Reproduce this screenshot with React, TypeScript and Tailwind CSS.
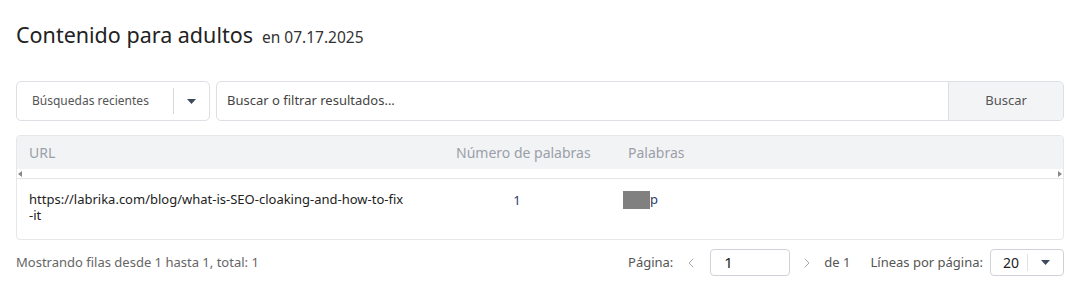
import { FC } from "react";
import { ChevronLeft, ChevronRight } from "lucide-react";

const Caret: FC = () => (
  <svg width="9" height="5" viewBox="0 0 9 5" className="fill-[#3d4a5c]">
    <path d="M0 0h9L4.5 5z" />
  </svg>
);

export default function App() {
  return (
    <div
      className="w-[1075px] h-[300px] bg-white pl-4 pr-[11px] text-[#333]"
      style={{ fontFamily: '"Noto Sans", sans-serif' }}
    >
      {/* title */}
      <div className="flex items-baseline gap-[9px] pt-[20px] h-[81px]">
        <h1 className="text-[21.5px] leading-[30px] text-[#222]">Contenido para adultos</h1>
        <span className="text-[15.5px] text-[#333]">en 07.17.2025</span>
      </div>

      {/* search row */}
      <div className="flex gap-[6px] h-[40px]">
        <div className="flex items-center w-[194px] border border-[#dcdfe4] rounded-[5px] text-[12px] text-[#555]">
          <span className="flex-1 pl-[15px]">Búsquedas recientes</span>
          <div className="w-px h-[26px] bg-[#d6d9de]" />
          <div className="w-[35px] flex justify-center">
            <Caret />
          </div>
        </div>
        <div className="flex flex-1 border border-[#dcdfe4] rounded-[5px] overflow-hidden">
          <div className="flex-1 flex items-center pl-[10px] text-[13px] text-[#444]">
            Buscar o filtrar resultados...
          </div>
          <button className="w-[115px] bg-[#f3f4f6] border-l border-[#dcdfe4] text-[13px] text-[#555]">
            Buscar
          </button>
        </div>
      </div>

      {/* table */}
      <div className="mt-[14px] border border-[#e5e7eb] rounded-[4px] overflow-hidden">
        <div className="flex items-center h-[33px] bg-[#f2f3f5] text-[14px] text-[#9aa0a8]">
          <div className="w-[439px] pl-[12px]">URL</div>
          <div className="w-[172px]">Número de palabras</div>
          <div>Palabras</div>
        </div>
        <div className="flex items-center justify-between h-[10px] px-[1px] border-b border-[#e5e7eb]">
          <svg width="4" height="6" viewBox="0 0 4 6" className="fill-[#888]">
            <path d="M4 0v6L0 3z" />
          </svg>
          <svg width="4" height="6" viewBox="0 0 4 6" className="fill-[#888]">
            <path d="M0 0v6l4-3z" />
          </svg>
        </div>
        <div className="flex h-[60px] pt-[12px] text-[13px] text-[#222]">
          <div className="w-[400px] pl-[12px] leading-[16px]">
            https://labrika.com/blog/what-is-SEO-cloaking-and-how-to-fix
            <br />
            -it
          </div>
          <div className="w-[200px] text-center text-[#2a3a6a]">1</div>
          <div className="relative pl-[6px] leading-[16px]">
            <span className="pl-[27px] text-[#2a3a6a]">p</span>
            <div className="absolute left-[6px] top-[0px] w-[27px] h-[18px] bg-[#808080]" />
          </div>
        </div>
      </div>

      {/* footer */}
      <div className="flex items-center justify-between mt-[9px] h-[27px] text-[13px]">
        <span className="text-[#666]">Mostrando filas desde 1 hasta 1, total: 1</span>
        <div className="flex items-center text-[#555]">
          <span>Página:</span>
          <ChevronLeft className="ml-[10px] w-[16px] h-[16px] text-[#aaa]" strokeWidth={1.5} />
          <div className="ml-[11px] w-[80px] h-[27px] border border-[#cfd3d9] rounded-[4px] flex items-center pl-[13px] text-[15px] text-[#222]">
            1
          </div>
          <ChevronRight className="ml-[9px] w-[16px] h-[16px] text-[#aaa]" strokeWidth={1.5} />
          <span className="ml-[9px]">de 1</span>
          <span className="ml-[20px]">Líneas por página:</span>
          <div className="ml-[7px] w-[74px] h-[27px] border border-[#cfd3d9] rounded-[4px] flex items-center">
            <span className="w-[36px] pl-[12px] text-[14px] text-[#222]">20</span>
            <div className="w-px h-[17px] bg-[#e0e2e6]" />
            <div className="flex-1 flex justify-center">
              <Caret />
            </div>
          </div>
        </div>
      </div>
    </div>
  );
}
